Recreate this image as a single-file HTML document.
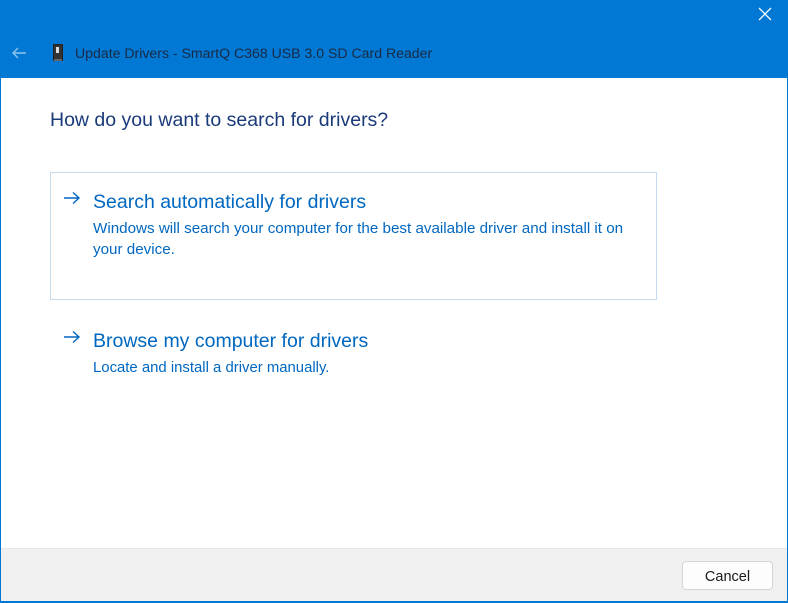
<!DOCTYPE html>
<html><head><style>
*{margin:0;padding:0;box-sizing:border-box}
body{width:788px;height:603px;overflow:hidden;background:#0078d4;font-family:"Liberation Sans",sans-serif;position:relative}
.win{position:absolute;left:1px;top:78px;width:786px;height:523px;background:#fff}
.foot{position:absolute;left:1px;top:548px;width:786px;height:53px;background:#f0f0f0;border-top:1px solid #e6e6e6}
.t{position:absolute;white-space:nowrap}
.blue{color:#0067c0}
</style></head><body>
<svg class="t" style="left:757px;top:6px" width="16" height="16"><path d="M2 2L14 14M14 2L2 14" stroke="#fff" stroke-width="1.3"/></svg>
<svg class="t" style="left:11px;top:46px" width="16" height="14"><path d="M15 7H2M7 2L2 7L7 12" stroke="#8fc3ee" stroke-width="1.4" fill="none"/></svg>
<svg class="t" style="left:52px;top:44px" width="12" height="18"><rect x="1.5" y="0.5" width="9" height="16" fill="#333" stroke="#222"/><rect x="4" y="3" width="3" height="6" fill="#ddd"/><rect x="2" y="15" width="8" height="2" fill="#666"/></svg>
<div class="t" style="left:75px;top:45px;font-size:14.1px;color:#1a2a44">Update Drivers - SmartQ C368 USB 3.0 SD Card Reader</div>
<div class="win"></div>
<div class="t" style="left:50px;top:109px;font-size:19.5px;color:#1a3a7a">How do you want to search for drivers?</div>
<div class="t" style="left:50px;top:172px;width:607px;height:128px;border:1px solid #c8dcef;background:#fff"></div>
<svg class="t" style="left:63px;top:191px" width="18" height="14"><path d="M1 7H16M10 1.5L16 7L10 12.5" stroke="#0067c0" stroke-width="1.4" fill="none"/></svg>
<div class="t blue" style="left:93px;top:191px;font-size:19.5px">Search automatically for drivers</div>
<div class="t blue" style="left:93px;top:218px;font-size:15.2px;line-height:21px">Windows will search your computer for the best available driver and install it on<br>your device.</div>
<svg class="t" style="left:63px;top:330px" width="18" height="14"><path d="M1 7H16M10 1.5L16 7L10 12.5" stroke="#0067c0" stroke-width="1.4" fill="none"/></svg>
<div class="t blue" style="left:93px;top:330px;font-size:19.5px">Browse my computer for drivers</div>
<div class="t blue" style="left:93px;top:360px;font-size:14.9px">Locate and install a driver manually.</div>
<div class="foot"></div>
<div class="t" style="left:682px;top:561px;width:91px;height:29px;background:#fdfdfd;border:1px solid #d5d5d5;border-radius:4px;font-size:14.5px;color:#1a1a1a;text-align:center;line-height:30px">Cancel</div>
</body></html>
